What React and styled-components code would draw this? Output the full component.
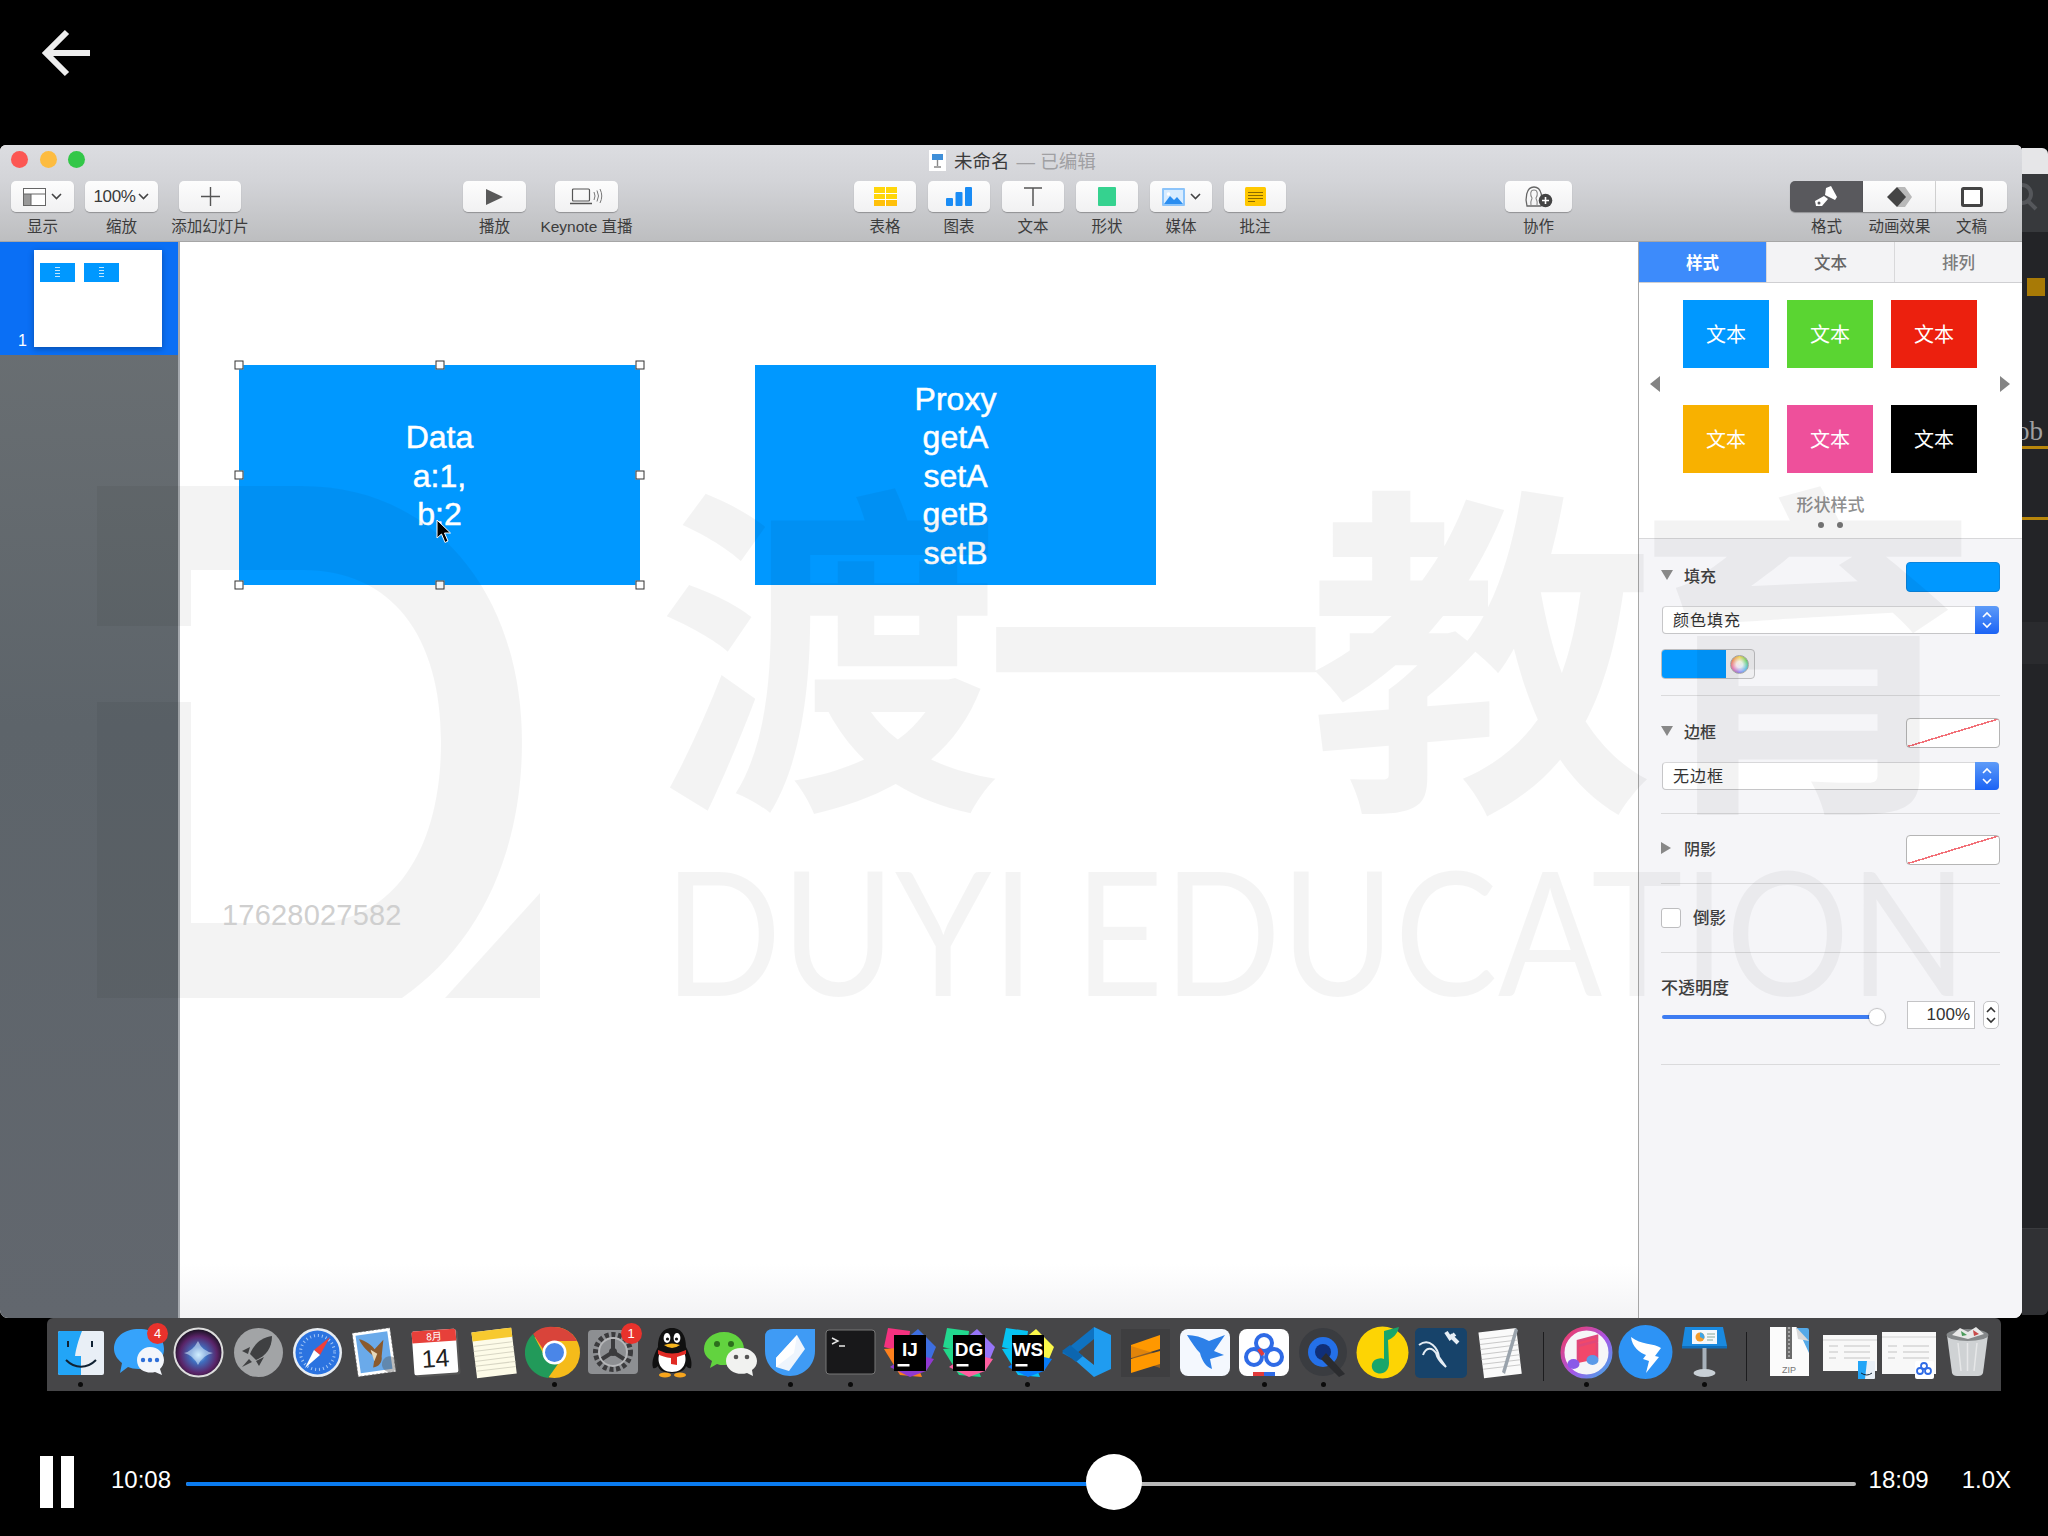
import styled, { createGlobalStyle } from "styled-components";

const UI_FONT = `"Liberation Sans", "Noto Sans CJK SC", sans-serif`;

const GlobalStyle = createGlobalStyle`
  html, body {
    margin: 0;
    padding: 0;
    background: #000;
  }
  * {
    box-sizing: border-box;
  }
`;

export default function App() {
  return (
    <>
      <GlobalStyle />
      <Page>
        <TopBar>
          <BackIcon width="60" height="56" viewBox="0 0 60 56">
            <path d="M28 6 L7 27 L28 48 M7 27 H51" fill="none" stroke="#eee" strokeWidth="6" />
          </BackIcon>
        </TopBar>
        <WindowRow>
          <Window>
            <TitleBar>
              <Lights>
                <Light $color="#fc5753" />
                <Light $color="#fdbc40" />
                <Light $color="#33c748" />
              </Lights>
              <DocIcon width="17" height="21" viewBox="0 0 17 21">
                <rect width="17" height="21" fill="#fff" />
                <rect x="3" y="4" width="11" height="6" fill="#3f8fd8" />
                <path d="M8.5 10v6M5 17h7" stroke="#888" strokeWidth="1.4" />
              </DocIcon>
              <TitleText>未命名</TitleText>
              <TitleMuted>— 已编辑</TitleMuted>
            </TitleBar>
            <Toolbar>
              <ToolGroup>
                <Tool label="显示" $w={63}>
                  <LayoutGlyph />
                  <Chevron />
                </Tool>
                <Tool label="缩放" $w={73}>
                  <ZoomText>100%</ZoomText>
                  <Chevron />
                </Tool>
              </ToolGroup>
              <ToolGroup $left={21}>
                <Tool label="添加幻灯片" $w={62}>
                  <PlusGlyph />
                </Tool>
              </ToolGroup>
              <ToolGroup $left={222} $gap={29}>
                <Tool label="播放" $w={63}>
                  <PlayGlyph />
                </Tool>
                <Tool label="Keynote 直播" $w={63}>
                  <LiveGlyph />
                </Tool>
              </ToolGroup>
              <ToolGroup $left={236} $gap={12}>
                <Tool label="表格" $w={62}>
                  <TableGlyph />
                </Tool>
                <Tool label="图表" $w={62}>
                  <ChartGlyph />
                </Tool>
                <Tool label="文本" $w={62}>
                  <TextGlyph />
                </Tool>
                <Tool label="形状" $w={62}>
                  <ShapeGlyph />
                </Tool>
                <Tool label="媒体" $w={62}>
                  <MediaGlyph />
                  <Chevron />
                </Tool>
                <Tool label="批注" $w={62}>
                  <CommentGlyph />
                </Tool>
              </ToolGroup>
              <ToolGroup $left={219}>
                <Tool label="协作" $w={67}>
                  <CollabGlyph />
                </Tool>
              </ToolGroup>
              <ToolGroup $left={218} $gap={0}>
                <Segment label="格式" $w={73} $active $pos="first">
                  <BrushGlyph />
                </Segment>
                <Segment label="动画效果" $w={73}>
                  <AnimateGlyph />
                </Segment>
                <Segment label="文稿" $w={71} $pos="last">
                  <DocumentGlyph />
                </Segment>
              </ToolGroup>
            </Toolbar>
            <Main>
              <Sidebar>
                <SlideRow>
                  <SlideNumber>1</SlideNumber>
                  <Thumb>
                    <ThumbBox />
                    <ThumbBox />
                  </Thumb>
                </SlideRow>
              </Sidebar>
              <Canvas>
                <Shape>
                  <span>Data</span>
                  <span>a:1,</span>
                  <span>b:2</span>
                  {[
                    [0, 0],
                    [50, 0],
                    [100, 0],
                    [0, 50],
                    [100, 50],
                    [0, 100],
                    [50, 100],
                    [100, 100],
                  ].map(([x, y]) => (
                    <Handle key={`${x}-${y}`} $x={x} $y={y} />
                  ))}
                  <Cursor width="16" height="25" viewBox="0 0 16 25">
                    <path d="M1 1 V19 L5.5 15 L9 23.5 L12 22 L8.5 14 H14.5 Z" fill="#000" stroke="#fff" strokeWidth="1" />
                  </Cursor>
                </Shape>
                <Shape>
                  <span>Proxy</span>
                  <span>getA</span>
                  <span>setA</span>
                  <span>getB</span>
                  <span>setB</span>
                </Shape>
              </Canvas>
              <Panel>
                <Tabs>
                  <Tab $active>样式</Tab>
                  <Tab>文本</Tab>
                  <Tab $muted>排列</Tab>
                </Tabs>
                <StylePicker>
                  <PickerRow>
                    <PickerArrow $dir="left" />
                    <SwatchGrid>
                      {["#0098ff", "#5ad532", "#ec200e", "#f8b100", "#ee509b", "#000000"].map((c) => (
                        <StyleSwatch key={c} $color={c}>
                          文本
                        </StyleSwatch>
                      ))}
                    </SwatchGrid>
                    <PickerArrow $dir="right" />
                  </PickerRow>
                  <PickerLabel>形状样式</PickerLabel>
                  <PickerDots>
                    <i />
                    <i />
                  </PickerDots>
                </StylePicker>
                <Inspector>
                  <Section $top={23} $bottom={16}>
                    <SectionHead>
                      <Disclosure />
                      <SectionTitle>填充</SectionTitle>
                      <ColorChip $color="#0098ff" />
                    </SectionHead>
                    <Select>颜色填充</Select>
                    <ColorWell>
                      <WellColor />
                      <WellWheel />
                    </ColorWell>
                  </Section>
                  <Section $top={22} $bottom={23}>
                    <SectionHead>
                      <Disclosure />
                      <SectionTitle>边框</SectionTitle>
                      <ColorChip $none />
                    </SectionHead>
                    <Select>无边框</Select>
                  </Section>
                  <Section $top={21} $bottom={18}>
                    <SectionHead>
                      <Disclosure $closed />
                      <SectionTitle>阴影</SectionTitle>
                      <ColorChip $none />
                    </SectionHead>
                  </Section>
                  <Section $top={24} $bottom={24}>
                    <CheckRow>
                      <CheckBox />
                      <CheckLabel>倒影</CheckLabel>
                    </CheckRow>
                  </Section>
                  <Section $top={23} $bottom={35}>
                    <OpacityLabel>不透明度</OpacityLabel>
                    <OpacityRow>
                      <Slider>
                        <SliderThumb />
                      </Slider>
                      <NumberField>100%</NumberField>
                      <Spinner>
                        <SpinGlyph color="#333" />
                      </Spinner>
                    </OpacityRow>
                  </Section>
                </Inspector>
              </Panel>
            </Main>
            <Watermark>
              <LogoMark width="450" height="520" viewBox="0 0 450 520">
                <path d="M0 0 H205 C340 0 425 110 425 256 C425 370 380 460 305 512 H0 V216 H94 V437 H215 C295 437 344 365 344 256 C344 150 295 84 205 84 H94 V140 H0 Z" />
                <path d="M348 512 L443 407 V512 Z" />
              </LogoMark>
              <BigName>渡一教育</BigName>
              <LatinName>DUYI EDUCATION</LatinName>
              <PhoneMark>17628027582</PhoneMark>
            </Watermark>
          </Window>
          <PeekWindow>
            <PeekTitle />
            <PeekSearch>
              <svg width="26" height="40" viewBox="0 0 26 40">
                <circle cx="0" cy="14" r="9" fill="none" stroke="#55575b" strokeWidth="4" />
                <path d="M6 21 L14 29" stroke="#55575b" strokeWidth="4" />
              </svg>
            </PeekSearch>
            <PeekEditor>
              <PeekMarker />
              <PeekWord>ob</PeekWord>
              <PeekRule $top={0} />
              <PeekRule $top={68} />
              <PeekBand />
              <PeekFooter />
            </PeekEditor>
          </PeekWindow>
        </WindowRow>
        <Dock>
          <DockSlot dot>
            <FinderIcon />
          </DockSlot>
          <DockSlot badge="4">
            <MessagesIcon />
          </DockSlot>
          <DockSlot>
            <SiriIcon />
          </DockSlot>
          <DockSlot>
            <LaunchpadIcon />
          </DockSlot>
          <DockSlot>
            <SafariIcon />
          </DockSlot>
          <DockSlot>
            <MailIcon />
          </DockSlot>
          <DockSlot>
            <CalendarIcon />
          </DockSlot>
          <DockSlot>
            <NotesIcon />
          </DockSlot>
          <DockSlot dot>
            <ChromeIcon />
          </DockSlot>
          <DockSlot badge="1">
            <SettingsIcon />
          </DockSlot>
          <DockSlot>
            <QQIcon />
          </DockSlot>
          <DockSlot>
            <WeChatIcon />
          </DockSlot>
          <DockSlot dot>
            <PenIcon />
          </DockSlot>
          <DockSlot dot>
            <TerminalIcon />
          </DockSlot>
          <DockSlot>
            <JetBrainsIcon label="IJ" colors={["#f5317f", "#3d6ee0", "#fc801d", "#9039d0"]} />
          </DockSlot>
          <DockSlot>
            <JetBrainsIcon label="DG" colors={["#22d88f", "#9775f8", "#21d789", "#ff5fa0"]} />
          </DockSlot>
          <DockSlot dot>
            <JetBrainsIcon label="WS" colors={["#07c3f2", "#fcf84a", "#07c3f2", "#087cfa"]} />
          </DockSlot>
          <DockSlot>
            <VSCodeIcon />
          </DockSlot>
          <DockSlot>
            <SublimeIcon />
          </DockSlot>
          <DockSlot>
            <BirdIcon />
          </DockSlot>
          <DockSlot dot>
            <BaiduIcon />
          </DockSlot>
          <DockSlot dot>
            <QuickTimeIcon />
          </DockSlot>
          <DockSlot>
            <MusicIcon />
          </DockSlot>
          <DockSlot>
            <WorkbenchIcon />
          </DockSlot>
          <DockSlot>
            <TextEditIcon />
          </DockSlot>
          <DockDivider />
          <DockSlot dot>
            <ITunesIcon />
          </DockSlot>
          <DockSlot>
            <DingIcon />
          </DockSlot>
          <DockSlot dot>
            <KeynoteIcon />
          </DockSlot>
          <DockDivider />
          <DockSlot>
            <ZipIcon />
          </DockSlot>
          <DockSlot>
            <StackIcon kind="finder" />
          </DockSlot>
          <DockSlot>
            <StackIcon kind="baidu" />
          </DockSlot>
          <DockSlot>
            <TrashIcon />
          </DockSlot>
        </Dock>
        <Player>
          <Pause>
            <i />
            <i />
          </Pause>
          <PlayerTime $left={37}>10:08</PlayerTime>
          <Track>
            <TrackFill style={{ width: `${((1114 - 185.5) / 1670.5) * 100}%` }}>
              <TrackThumb />
            </TrackFill>
          </Track>
          <PlayerTime $left={13}>18:09</PlayerTime>
          <Speed>1.0X</Speed>
        </Player>
      </Page>
    </>
  );
}

function Tool({ label, $w, children }) {
  return (
    <ToolBox $w={$w}>
      <ToolButton>{children}</ToolButton>
      <ToolLabel>{label}</ToolLabel>
    </ToolBox>
  );
}

function Segment({ label, $w, $active, $pos, children }) {
  return (
    <ToolBox $w={$w}>
      <SegmentButton $active={$active} $pos={$pos}>
        {children}
      </SegmentButton>
      <ToolLabel>{label}</ToolLabel>
    </ToolBox>
  );
}

function Select({ children }) {
  return (
    <SelectBox>
      <SelectText>{children}</SelectText>
      <SelectStepper>
        <SpinGlyph color="#fff" />
      </SelectStepper>
    </SelectBox>
  );
}

function DockSlot({ dot, badge, children }) {
  return (
    <Slot>
      <svg width="59" height="58" viewBox="0 0 59 58">
        {children}
      </svg>
      {badge && <Badge>{badge}</Badge>}
      <SlotDot $on={dot} />
    </Slot>
  );
}

/* toolbar glyphs */
const Chevron = () => (
  <ChevronSvg width="11" height="7" viewBox="0 0 11 7">
    <path d="M1 1 L5.5 5.5 L10 1" fill="none" stroke="#444" strokeWidth="1.6" />
  </ChevronSvg>
);
const LayoutGlyph = () => (
  <svg width="23" height="18" viewBox="0 0 23 18">
    <rect x="0.5" y="0.5" width="22" height="17" fill="#fff" stroke="#666" />
    <rect x="1" y="6" width="7" height="11" fill="#999" />
    <path d="M1 6 H22 M8 6 V17" stroke="#666" />
  </svg>
);
const PlusGlyph = () => (
  <svg width="19" height="19" viewBox="0 0 19 19">
    <path d="M9.5 0 V19 M0 9.5 H19" stroke="#555" strokeWidth="1.4" />
  </svg>
);
const PlayGlyph = () => (
  <svg width="17" height="16" viewBox="0 0 17 16">
    <path d="M0 0 L17 8 L0 16 Z" fill="#595959" />
  </svg>
);
const LiveGlyph = () => (
  <svg width="33" height="17" viewBox="0 0 33 17">
    <rect x="2.5" y="1" width="17" height="12" rx="1" fill="none" stroke="#555" strokeWidth="1.2" />
    <path d="M0 15.5 H22" stroke="#555" strokeWidth="1.6" />
    <path d="M24 4 Q26 8 24 12 M27 2.5 Q30 8 27 13.5 M30 1 Q33.5 8 30 15" fill="none" stroke="#777" strokeWidth="1" />
  </svg>
);
const TableGlyph = () => (
  <svg width="23" height="19" viewBox="0 0 23 19">
    <rect width="23" height="13" fill="#ffd60a" />
    <rect y="13" width="23" height="6" fill="#ffc00a" />
    <path d="M11.5 0 V19 M0 6.5 H23 M0 12.5 H23" stroke="#fff" strokeWidth="1" />
  </svg>
);
const ChartGlyph = () => (
  <svg width="26" height="19" viewBox="0 0 26 19">
    <rect y="11" width="7" height="8" rx="1" fill="#1a8cf5" />
    <rect x="9.5" y="5" width="7" height="14" rx="1" fill="#1a8cf5" />
    <rect x="19" y="0" width="7" height="19" rx="1" fill="#1a8cf5" />
  </svg>
);
const TextGlyph = () => (
  <svg width="18" height="19" viewBox="0 0 18 19">
    <path d="M0 1 H18 M9 1 V19" stroke="#555" strokeWidth="1.5" fill="none" />
  </svg>
);
const ShapeGlyph = () => (
  <svg width="18" height="19" viewBox="0 0 18 19">
    <rect width="18" height="19" rx="1" fill="#35d28f" />
  </svg>
);
const MediaGlyph = () => (
  <svg width="23" height="18" viewBox="0 0 23 18">
    <rect width="23" height="18" rx="1" fill="#8cc4fa" />
    <rect x="2" y="2" width="19" height="14" fill="#d8ecff" />
    <path d="M2 16 L8 8 L12 12 L15 9 L21 16 Z" fill="#2a8df0" />
    <circle cx="6.5" cy="6" r="1.8" fill="#fff" />
  </svg>
);
const CommentGlyph = () => (
  <svg width="21" height="19" viewBox="0 0 21 19">
    <rect width="21" height="19" rx="1.5" fill="#ffc800" />
    <path d="M3 5.5 H18 M3 8.5 H18 M3 11.5 H18 M3 14.5 H10" stroke="#8a6a00" strokeWidth="1" />
  </svg>
);
const CollabGlyph = () => (
  <svg width="29" height="24" viewBox="0 0 29 24">
    <path d="M3 21 C1 14 2 2 10 2 C18 2 19 14 17 21 Z" fill="none" stroke="#666" strokeWidth="1.3" />
    <path d="M7 20 C6 15 8 15 8 13 C6 10 6 5 10 5 C14 5 14 10 12 13 C12 15 14 15 13 20" fill="none" stroke="#888" strokeWidth="1.1" />
    <circle cx="21.5" cy="15.5" r="6.8" fill="#444" />
    <path d="M21.5 12 V19 M18 15.5 H25" stroke="#fff" strokeWidth="1.6" />
  </svg>
);
const BrushGlyph = () => (
  <svg width="23" height="21" viewBox="0 0 23 21">
    <path d="M11 2 L16 0 L22 11 L20 14 L10 9 Z" fill="#fff" />
    <path d="M9 10 L13 13 L7 20 L1 20 L0 15 Z" fill="#fff" />
    <circle cx="4" cy="17" r="1.5" fill="#5a5a5e" />
  </svg>
);
const AnimateGlyph = () => (
  <svg width="25" height="20" viewBox="0 0 25 20">
    <path d="M10 0 L15 10 L10 20 L18 20 L25 10 L18 0 Z" fill="#b9b9b9" />
    <path d="M10 0 L19 10 L10 20 L0 10 Z" fill="#444" />
  </svg>
);
const DocumentGlyph = () => (
  <svg width="22" height="20" viewBox="0 0 22 20">
    <rect x="1.5" y="1.5" width="19" height="17" rx="1" fill="#fff" stroke="#444" strokeWidth="3" />
  </svg>
);
const SpinGlyph = ({ color }) => (
  <svg width="12" height="20" viewBox="0 0 12 20">
    <path d="M2 7 L6 3 L10 7 M2 13 L6 17 L10 13" fill="none" stroke={color} strokeWidth="1.6" />
  </svg>
);

/* dock icons, all drawn in a 59 x 58 slot */
const FinderIcon = () => (
  <g>
    <rect x="7" y="8" width="46" height="44" rx="2" fill="#e9eff6" />
    <path d="M9 8 H31 C27 18 25 26 24 33 H30 V52 H9 Q7 52 7 50 V10 Q7 8 9 8 Z" fill="#22a5f7" />
    <path d="M17 18 V24 M41 18 V24" stroke="#123" strokeWidth="2" />
    <path d="M15 37 C24 46 36 46 45 37" fill="none" stroke="#123" strokeWidth="2" />
  </g>
);
const MessagesIcon = () => (
  <g>
    <path d="M29 6 C44 6 54 14 54 26 C54 38 44 46 29 46 C24 46 21 45 18 44 L10 50 L12 40 C7 36 4 31 4 26 C4 14 14 6 29 6 Z" fill="#36a3fb" />
    <path d="M40 24 C48 24 54 30 54 37 C54 41 52 44 50 46 L52 52 L45 49 C38 51 27 48 27 37 C27 30 33 24 40 24 Z" fill="#f3f6fb" />
    <circle cx="33" cy="37" r="2.2" fill="#2f6fd8" />
    <circle cx="40" cy="37" r="2.2" fill="#2f6fd8" />
    <circle cx="47" cy="37" r="2.2" fill="#2f6fd8" />
  </g>
);
const SiriIcon = () => (
  <g>
    <defs>
      <radialGradient id="siri" cx="50%" cy="55%" r="55%">
        <stop offset="0" stopColor="#bfe9ff" />
        <stop offset="0.3" stopColor="#3f6fc0" />
        <stop offset="0.7" stopColor="#5a2468" />
        <stop offset="1" stopColor="#101018" />
      </radialGradient>
    </defs>
    <circle cx="29.5" cy="29.5" r="24" fill="url(#siri)" stroke="#ddd" strokeWidth="2" />
    <path d="M15 30 Q24 28 29 18 Q33 28 44 30 Q34 32 29 42 Q24 32 15 30 Z" fill="#dff3ff" opacity="0.55" />
  </g>
);
const LaunchpadIcon = () => (
  <g>
    <circle cx="29.5" cy="29.5" r="24.5" fill="#a2a4a6" />
    <path d="M43 13 C33 14 25 21 21 31 L27 37 C37 33 43 25 43 13 Z" fill="#3f4042" />
    <path d="M21 24 L13 28 L19 31 Z M35 34 L30 43 L27 38 Z M20 36 L13 44 L23 39 Z" fill="#3f4042" />
  </g>
);
const SafariIcon = () => (
  <g>
    <circle cx="29.5" cy="29.5" r="24.5" fill="#e8edf2" />
    <circle cx="29.5" cy="29.5" r="22" fill="#2b73e0" />
    <circle cx="29.5" cy="29.5" r="17" fill="none" stroke="#a5c8f5" strokeWidth="3" strokeDasharray="1 3" />
    <path d="M42 14 L32 32 L26 27 Z" fill="#f0403a" />
    <path d="M17 45 L26 27 L32 32 Z" fill="#fff" />
  </g>
);
const MailIcon = () => (
  <g transform="rotate(-8 29 29)">
    <rect x="8" y="7" width="38" height="44" fill="#fff" strokeDasharray="2 2" stroke="#666" strokeWidth="0.6" />
    <rect x="11" y="10" width="32" height="38" fill="#6aaaea" />
    <path d="M14 14 C20 16 26 22 28 26 L38 18 L34 34 C34 40 30 44 24 44 L27 34 C22 28 16 22 14 14 Z" fill="#8a5a2e" />
    <path d="M24 26 L30 31 L26 38 Z" fill="#e8d8b8" />
    <circle cx="41" cy="43" r="8" fill="#555" opacity="0.4" />
  </g>
);
const CalendarIcon = () => (
  <g transform="rotate(-4 29 29)">
    <rect x="9" y="9" width="44" height="44" rx="2" fill="#555" />
    <rect x="7" y="7" width="44" height="44" rx="2" fill="#fff" />
    <path d="M7 9 Q7 7 9 7 H49 Q51 7 51 9 V19 H7 Z" fill="#e7403a" />
    <text x="29" y="17" textAnchor="middle" fontSize="10" fill="#fff" fontFamily={UI_FONT}>
      8月
    </text>
    <text x="29" y="44" textAnchor="middle" fontSize="25" fill="#222" fontFamily={UI_FONT}>
      14
    </text>
  </g>
);
const NotesIcon = () => (
  <g transform="rotate(-7 29 29)">
    <rect x="9" y="7" width="40" height="46" fill="#fdfbe8" />
    <rect x="9" y="7" width="40" height="9" fill="#f7c92f" />
    <path d="M9 21 H49 M9 26 H49 M9 31 H49 M9 36 H49 M9 41 H49 M9 46 H49" stroke="#d8d6c4" strokeWidth="1" />
  </g>
);
const ChromeIcon = () => (
  <g>
    <circle cx="29.5" cy="29.5" r="25.5" fill="#f5bb1a" />
    <path d="M29.5 4 A25.5 25.5 0 0 1 52 18 L29.5 18 A12 12 0 0 0 18 26 L8 11 A25.5 25.5 0 0 1 29.5 4 Z" fill="#d9443a" />
    <path d="M8 11 L19 32 A12 12 0 0 0 33 41 L23 55 A25.5 25.5 0 0 1 8 11 Z" fill="#229a5a" />
    <circle cx="29.5" cy="29.5" r="12" fill="#fff" />
    <circle cx="29.5" cy="29.5" r="9.5" fill="#4a86e8" />
  </g>
);
const SettingsIcon = () => (
  <g>
    <rect x="4" y="7" width="50" height="44" rx="4" fill="#8d8f92" />
    <circle cx="29" cy="29" r="17" fill="none" stroke="#3b3b3d" strokeWidth="6" strokeDasharray="4 2.5" />
    <circle cx="29" cy="29" r="14" fill="none" stroke="#b5b6b8" strokeWidth="2" />
    <path d="M29 29 V16 M29 29 L18 36 M29 29 L40 36" stroke="#3b3b3d" strokeWidth="4" />
    <circle cx="29" cy="29" r="4" fill="#3b3b3d" />
  </g>
);
const QQIcon = () => (
  <g>
    <path d="M29 5 C40 5 43 15 43 24 C46 30 50 38 48 45 C46 46 44 44 43 43 C42 47 38 50 29 50 C20 50 16 47 15 43 C14 44 12 46 10 45 C8 38 12 30 15 24 C15 15 18 5 29 5 Z" fill="#101010" />
    <path d="M17 29 C22 32 36 32 41 29 C45 38 41 49 29 49 C17 49 13 38 17 29 Z" fill="#fff" />
    <ellipse cx="24" cy="15" rx="3.4" ry="5" fill="#fff" />
    <ellipse cx="34" cy="15" rx="3.4" ry="5" fill="#fff" />
    <circle cx="24.5" cy="16" r="1.6" fill="#111" />
    <circle cx="33.5" cy="16" r="1.6" fill="#111" />
    <path d="M21 22 Q29 19 37 22 Q29 28 21 22 Z" fill="#f7b51d" />
    <path d="M15 27 Q29 34 43 27 L43 31 L34 34 V42 L28 41 V35 Q20 34 15 31 Z" fill="#e02a24" />
    <ellipse cx="22" cy="52" rx="6" ry="2.5" fill="#f7a51d" />
    <ellipse cx="37" cy="52" rx="6" ry="2.5" fill="#f7a51d" />
  </g>
);
const WeChatIcon = () => (
  <g>
    <path d="M22 9 C34 9 42 17 42 26 C42 35 34 42 22 42 C19 42 17 42 15 41 L8 45 L10 38 C5 35 2 31 2 26 C2 17 10 9 22 9 Z" fill="#62d33f" />
    <circle cx="15" cy="21" r="3" fill="#2d6e1d" />
    <circle cx="29" cy="21" r="3" fill="#2d6e1d" />
    <path d="M39 25 C48 25 55 31 55 38 C55 42 53 45 50 47 L51 53 L45 50 C36 53 24 48 24 38 C24 31 30 25 39 25 Z" fill="#f1f2f0" />
    <circle cx="34" cy="34" r="2.3" fill="#555" />
    <circle cx="45" cy="34" r="2.3" fill="#555" />
  </g>
);
const PenIcon = () => (
  <g>
    <path d="M12 6 H54 V28 C54 42 43 53 29 53 C15 53 4 42 4 28 V14 Q4 6 12 6 Z" fill="#3f9bf5" />
    <path d="M36 12 L44 26 L28 48 L15 44 L15 35 Z" fill="#eef5fd" />
    <path d="M15 35 L36 12 L33 30 L15 44 Z" fill="#fff" />
  </g>
);
const TerminalIcon = () => (
  <g>
    <rect x="5" y="7" width="49" height="44" rx="3" fill="#18181a" stroke="#777" strokeWidth="1" />
    <path d="M11 15 L17 18 L11 21 M18 23 H24" fill="none" stroke="#e8e8e8" strokeWidth="1.4" />
  </g>
);
const JetBrainsIcon = ({ label, colors }) => (
  <g>
    <path d="M8 5 L30 8 L27 30 L4 24 Z" fill={colors[0]} />
    <path d="M38 6 L56 24 L46 48 L26 16 Z" fill={colors[1]} />
    <path d="M4 26 L20 52 L42 54 L30 24 Z" fill={colors[2]} />
    <path d="M30 30 L54 36 L46 48 L30 54 L10 44 Z" fill={colors[3]} />
    <rect x="14" y="12" width="32" height="36" fill="#000" />
    <text x="30" y="33" textAnchor="middle" fontSize="19" fontWeight="700" fill="#fff" fontFamily={UI_FONT}>
      {label}
    </text>
    <rect x="17.5" y="41" width="12" height="2.5" fill="#fff" />
  </g>
);
const VSCodeIcon = () => (
  <g>
    <path d="M37 4 L54 12 V46 L37 54 L12 32 L18 27 L37 42 Z" fill="#1f9cf0" />
    <path d="M37 4 V16 L14 35 L5 30 Z" fill="#0f72c1" />
    <path d="M5 28 L13 22 L26 33 L19 39 Z" fill="#0c66b0" />
  </g>
);
const SublimeIcon = () => (
  <g>
    <rect x="5" y="6" width="49" height="48" fill="#3e3e40" />
    <path d="M44 12 V26 L15 35 V22 Z" fill="#ff9800" />
    <path d="M15 23 L44 32 V45 L15 35 Z" fill="#c97412" opacity="0.55" />
    <path d="M44 28 V41 L15 50 V36 Z" fill="#ff9800" />
  </g>
);
const BirdIcon = () => (
  <g>
    <rect x="4" y="6" width="50" height="47" rx="8" fill="#f4f8fe" />
    <path d="M49 12 L33 18 C26 14 18 12 11 12 C16 20 20 26 24 30 C26 38 30 44 36 46 L34 36 L48 32 L38 28 Z" fill="#2d80e8" />
  </g>
);
const BaiduIcon = () => (
  <g>
    <rect x="4" y="6" width="50" height="47" rx="8" fill="#fff" />
    <g fill="none" stroke="#2f6be6" strokeWidth="4">
      <circle cx="29" cy="20" r="8" />
      <circle cx="19" cy="34" r="8" />
      <circle cx="39" cy="34" r="8" />
    </g>
    <path d="M24 26 L28 32" stroke="#e23b3b" strokeWidth="4" />
    <rect x="18" y="49" width="11" height="4" fill="#e23b3b" />
    <rect x="29" y="49" width="11" height="4" fill="#2f6be6" />
  </g>
);
const QuickTimeIcon = () => (
  <g>
    <circle cx="29" cy="29" r="24" fill="#3a3c40" />
    <circle cx="29" cy="29" r="15" fill="#2470e8" />
    <circle cx="29" cy="29" r="8" fill="#102f78" />
    <path d="M32 30 L51 51 L45 54 L27 36 Z" fill="#2b2c2f" />
  </g>
);
const MusicIcon = () => (
  <g>
    <circle cx="29.5" cy="29.5" r="26" fill="#fdd404" />
    <path d="M31 8 L46 4 C44 12 40 15 35 17 L36 40 C36 48 30 52 24 50 C17 48 17 38 24 36 C27 35 29 35 31 36 Z" fill="#18a66a" />
  </g>
);
const WorkbenchIcon = () => (
  <g>
    <rect x="3" y="5" width="52" height="50" rx="5" fill="#17436a" />
    <path d="M7 22 C18 14 26 26 27 34 L34 44 C30 40 26 38 24 30 C20 24 14 24 11 32" fill="none" stroke="#e6eef5" strokeWidth="2" />
    <path d="M38 12 L46 20 M34 9 L38 15 L43 11" fill="none" stroke="#e6eef5" strokeWidth="4" />
  </g>
);
const TextEditIcon = () => (
  <g>
    <g transform="rotate(-7 29 29)">
      <rect x="9" y="7" width="38" height="46" fill="#fafafa" />
      <path d="M9 14 H47 M9 19 H47 M9 24 H47 M9 29 H47 M9 34 H47 M9 39 H47 M9 44 H47" stroke="#c9c9c9" strokeWidth="1" />
    </g>
    <path d="M43 5 L46 7 L33 51 L30 49 Z" fill="#9aa3ac" />
  </g>
);
const ITunesIcon = () => (
  <g>
    <defs>
      <linearGradient id="itunes" x1="0" y1="0" x2="1" y2="1">
        <stop offset="0" stopColor="#f53a5a" />
        <stop offset="0.55" stopColor="#a855e8" />
        <stop offset="1" stopColor="#38b0e8" />
      </linearGradient>
    </defs>
    <circle cx="29.5" cy="29.5" r="24" fill="#f6f6f8" stroke="url(#itunes)" strokeWidth="4" />
    <path d="M21 40 V18 L40 13 V36 M21 18 L40 13 V18 L21 23 Z" fill="#f2486a" stroke="#e0487a" strokeWidth="2.6" />
    <ellipse cx="16.5" cy="41" rx="6" ry="5" fill="#8a5ae8" />
    <ellipse cx="35.5" cy="37" rx="6" ry="5" fill="#5a9ae8" />
  </g>
);
const DingIcon = () => (
  <g>
    <circle cx="29.5" cy="29" r="27" fill="#2d93f5" />
    <path d="M15 14 C25 22 38 20 45 25 L39 33 L43 34 L30 50 L33 38 L27 36 L30 32 C24 30 16 24 15 14 Z" fill="#fff" />
  </g>
);
const KeynoteIcon = () => (
  <g>
    <path d="M10 4 H48 L52 23 H7 Z" fill="#1a8ae0" />
    <rect x="7" y="23" width="45" height="2.5" fill="#0f6cb8" />
    <rect x="17" y="7" width="25" height="14" fill="#f5f8fc" />
    <circle cx="25" cy="14" r="4.5" fill="#f39c2c" />
    <path d="M25 14 V9.5 A4.5 4.5 0 0 1 29 16 Z" fill="#3da5e8" />
    <path d="M32 11 H40 M32 14 H40 M32 17 H38" stroke="#8a9" strokeWidth="1" />
    <rect x="27.5" y="25" width="4" height="22" fill="#a7b1ba" />
    <ellipse cx="29.5" cy="50" rx="11" ry="4" fill="#c9d0d6" />
  </g>
);
const ZipIcon = () => (
  <g>
    <path d="M10 4 H36 L49 15 V53 H10 Z" fill="#fbfbfb" />
    <path d="M36 5 H47 Q49 5 49 7 V30 L42 15 Z" fill="#54a9e8" />
    <path d="M36 4 L49 18 L38 16 Z" fill="#d8d8d8" />
    <rect x="26" y="4" width="6" height="32" fill="#6a6a6a" />
    <path d="M29 4 V34" stroke="#bbb" strokeWidth="1.5" strokeDasharray="2 2" />
    <text x="29" y="50" textAnchor="middle" fontSize="9" fill="#777" fontFamily={UI_FONT}>
      ZIP
    </text>
  </g>
);
const StackIcon = ({ kind }) => (
  <g>
    <rect x="3" y={kind === "finder" ? 12 : 9} width="54" height={kind === "finder" ? 36 : 42} fill="#f8f8f8" />
    <path d={kind === "finder" ? "M3 17 H57" : "M3 14 H57"} stroke="#d2d2d2" strokeWidth="1" />
    <path d="M9 23 H18 M9 29 H18 M9 35 H16 M24 23 H50 M24 29 H50 M24 35 H50" stroke="#c4c4c4" strokeWidth="1" />
    {kind === "finder" ? (
      <g>
        <rect x="38" y="38" width="17" height="18" rx="1" fill="#e9eff6" />
        <path d="M38 38 H47 L45 56 H38 Z" fill="#22a5f7" />
        <path d="M41 50 Q47 54 52 50" fill="none" stroke="#123" strokeWidth="1" />
      </g>
    ) : (
      <g>
        <rect x="36" y="38" width="19" height="18" rx="2" fill="#fff" />
        <g fill="none" stroke="#2f6be6" strokeWidth="1.8">
          <circle cx="45" cy="43" r="3" />
          <circle cx="41" cy="48" r="3" />
          <circle cx="49" cy="48" r="3" />
        </g>
      </g>
    )}
  </g>
);
const TrashIcon = () => (
  <g>
    <path d="M9 12 H50 L45 50 Q44 53 40 53 H19 Q15 53 14 50 Z" fill="#cfd2d4" />
    <ellipse cx="29.5" cy="12" rx="21" ry="6" fill="#85888a" />
    <path d="M14 12 L22 5 L30 9 L38 4 L46 11 L30 16 Z" fill="#e8e8e8" />
    <path d="M23 8 L29 12 L24 13 Z" fill="#4a9a5a" />
    <path d="M35 7 L41 11 L36 13 Z" fill="#c84a4a" />
    <path d="M20 20 L23 48 M29.5 20 V48 M39 20 L36 48" stroke="#e6e7e8" strokeWidth="1.5" />
  </g>
);

const Page = styled.div`
  width: 2048px;
  height: 1536px;
  display: flex;
  flex-direction: column;
  background: #000;
  font-family: ${UI_FONT};
  overflow: hidden;
`;

const TopBar = styled.header`
  height: 145px;
  padding: 26px 0 0 39px;
`;

const BackIcon = styled.svg`
  display: block;
`;

const WindowRow = styled.div`
  height: 1173px;
  display: flex;
`;

const Window = styled.section`
  position: relative;
  width: 2022px;
  display: flex;
  flex-direction: column;
  border-radius: 6px 6px 8px 8px;
  overflow: hidden;
  background: #fff;
`;

const TitleBar = styled.div`
  height: 36px;
  display: flex;
  align-items: center;
  padding: 0 0 6px 929px;
  position: relative;
  background: linear-gradient(#dcdde1, #d3d4d8);
`;

const Lights = styled.div`
  position: absolute;
  left: 11px;
  top: 6px;
  display: flex;
  gap: 11.5px;
`;

const Light = styled.i`
  width: 17px;
  height: 17px;
  border-radius: 50%;
  background: ${(p) => p.$color};
`;

const DocIcon = styled.svg`
  margin-right: 8px;
`;

const TitleText = styled.span`
  font-size: 18.5px;
  color: #3b3b3b;
  margin-right: 7px;
`;

const TitleMuted = styled.span`
  font-size: 18.5px;
  color: #a0a0a3;
`;

const Toolbar = styled.div`
  height: 61px;
  display: flex;
  align-items: flex-start;
  padding-left: 11px;
  background: linear-gradient(#d3d4d8, #bdbec0);
  border-bottom: 1px solid #a6a6a6;
`;

const ToolGroup = styled.div`
  display: flex;
  gap: ${(p) => p.$gap ?? 11}px;
  margin-left: ${(p) => p.$left || 0}px;
`;

const ToolBox = styled.div`
  width: ${(p) => p.$w}px;
  display: flex;
  flex-direction: column;
  align-items: center;
`;

const ToolButton = styled.div`
  width: 100%;
  height: 31px;
  display: flex;
  align-items: center;
  justify-content: center;
  gap: 5px;
  background: linear-gradient(#fdfdfd, #f1f1f2);
  border-radius: 5px;
  box-shadow: 0 1px 1px rgba(0, 0, 0, 0.28);
`;

const SegmentButton = styled(ToolButton)`
  background: ${(p) => (p.$active ? "#59595d" : "linear-gradient(#fdfdfd, #f1f1f2)")};
  border-radius: ${(p) => (p.$pos === "first" ? "5px 0 0 5px" : p.$pos === "last" ? "0 5px 5px 0" : "0")};
  border-right: ${(p) => (p.$pos === "last" || p.$active ? "0" : "1px solid #d5d5d5")};
`;

const ToolLabel = styled.span`
  flex: none;
  margin-top: 6px;
  font-size: 15.5px;
  line-height: 18px;
  color: #3c3c3c;
  white-space: nowrap;
`;

const ChevronSvg = styled.svg`
  flex: none;
`;

const ZoomText = styled.span`
  font-size: 17px;
  color: #3a3a3a;
  letter-spacing: -0.4px;
  margin-right: -2px;
`;

const Main = styled.div`
  flex: 1;
  display: flex;
  min-height: 0;
`;

const Sidebar = styled.aside`
  width: 180px;
  background: linear-gradient(#6c7174, #5d646a 45%, #62676e);
  border-right: 2px solid #a5a9ae;
`;

const SlideRow = styled.div`
  height: 113px;
  padding: 8px 0 0 18px;
  display: flex;
  align-items: flex-end;
  background: #0a6ff5;
`;

const SlideNumber = styled.span`
  width: 16px;
  margin-bottom: 5px;
  font-size: 16px;
  line-height: 18px;
  color: #fff;
`;

const Thumb = styled.div`
  width: 128px;
  height: 97px;
  margin-bottom: 8px;
  padding: 13px 0 0 6px;
  display: flex;
  align-items: flex-start;
  gap: 9px;
  background: #fff;
  box-shadow: 0 2px 6px rgba(0, 0, 0, 0.3);
`;

const ThumbBox = styled.div`
  width: 35px;
  height: 19px;
  display: flex;
  align-items: center;
  justify-content: center;
  background: #0098ff;
  &::after {
    content: "";
    width: 5px;
    height: 11px;
    background: repeating-linear-gradient(#bfe5ff 0 1px, transparent 1px 3px);
  }
`;

const Canvas = styled.main`
  flex: 1;
  padding: 123px 0 0 59px;
  display: flex;
  align-items: flex-start;
  gap: 115px;
  background: linear-gradient(#fff 95%, #f3f3f5);
`;

const Shape = styled.div`
  position: relative;
  width: 401px;
  height: 220px;
  padding-top: 2px;
  display: flex;
  flex-direction: column;
  align-items: center;
  justify-content: center;
  background: #0098ff;
  color: #fff;
  font-size: 32px;
  line-height: 38.4px;
  -webkit-text-stroke: 0.5px #fff;
`;

const Handle = styled.i`
  position: absolute;
  left: ${(p) => p.$x}%;
  top: ${(p) => p.$y}%;
  width: 9px;
  height: 9px;
  transform: translate(-50%, -50%);
  background: #fff;
  border: 1px solid #333;
`;

const Cursor = styled.svg`
  position: absolute;
  left: 197px;
  top: 154px;
`;

const Panel = styled.aside`
  width: 384px;
  display: flex;
  flex-direction: column;
  border-left: 1px solid #a8a8a8;
  background: #f5f5f8;
`;

const Tabs = styled.div`
  height: 41px;
  display: flex;
  background: #f3f3f5;
  border-bottom: 1px solid #cfcfd2;
`;

const Tab = styled.div`
  flex: 1;
  display: flex;
  align-items: center;
  justify-content: center;
  font-size: 16.5px;
  font-weight: ${(p) => (p.$active ? 700 : 500)};
  color: ${(p) => (p.$active ? "#fff" : p.$muted ? "#7c7c7c" : "#666")};
  background: ${(p) => (p.$active ? "#3d8bfb" : "transparent")};
  & + & {
    border-left: 1px solid #d8d8da;
  }
`;

const StylePicker = styled.div`
  height: 256px;
  padding-top: 17px;
  display: flex;
  flex-direction: column;
  align-items: center;
  background: #fff;
  border-bottom: 1px solid #d8d8da;
`;

const PickerRow = styled.div`
  width: 100%;
  padding-left: 11px;
  display: flex;
  align-items: center;
  gap: 23px;
`;

const PickerArrow = styled.i`
  width: 0;
  height: 0;
  margin-top: -6px;
  border-style: solid;
  border-width: 8px 0 8px 10px;
  border-color: transparent transparent transparent #848484;
  transform: ${(p) => (p.$dir === "left" ? "rotate(180deg)" : "none")};
`;

const SwatchGrid = styled.div`
  display: grid;
  grid-template-columns: repeat(3, 86px);
  grid-auto-rows: 68px;
  column-gap: 18px;
  row-gap: 37px;
`;

const StyleSwatch = styled.div`
  padding-bottom: 2px;
  display: flex;
  align-items: center;
  justify-content: center;
  background: ${(p) => p.$color};
  color: #fff;
  font-size: 20px;
`;

const PickerLabel = styled.span`
  margin-top: 22px;
  font-size: 17px;
  line-height: 22px;
  font-weight: 500;
  color: #8f8f8f;
`;

const PickerDots = styled.div`
  margin-top: 5px;
  display: flex;
  gap: 13px;
  i {
    width: 6px;
    height: 6px;
    border-radius: 50%;
    background: #777;
  }
`;

const Inspector = styled.div`
  flex: 1;
  padding: 0 22px;
`;

const Section = styled.section`
  padding: ${(p) => p.$top}px 0 ${(p) => p.$bottom}px;
  border-bottom: 1px solid #dadadc;
`;

const SectionHead = styled.div`
  height: 30px;
  display: flex;
  align-items: center;
`;

const Disclosure = styled.i`
  display: block;
  width: 0;
  margin-bottom: 4px;
  border-style: solid;
  border-color: ${(p) => (p.$closed ? "transparent transparent transparent #888" : "#888 transparent transparent transparent")};
  border-width: ${(p) => (p.$closed ? "6px 0 6px 10px" : "10px 6px 0 6px")};
  margin-right: ${(p) => (p.$closed ? "13px" : "11px")};
`;

const SectionTitle = styled.span`
  margin-bottom: 5px;
  font-size: 16px;
  color: #3f3f3f;
  font-weight: 500;
`;

const ColorChip = styled.div`
  width: 94px;
  height: 30px;
  margin-left: auto;
  border-radius: 4px;
  border: 1px solid ${(p) => (p.$none ? "#b5b5b5" : "#0a84dd")};
  background: ${(p) =>
    p.$none
      ? `linear-gradient(to bottom right, #fff calc(50% - 1px), #f27078 calc(50% - 1px), #f27078 calc(50% + 0.5px), #fff calc(50% + 0.5px))`
      : p.$color};
`;

const SelectBox = styled.div`
  height: 28px;
  margin: 14px 1px 0;
  display: flex;
  align-items: center;
  border-radius: 4px;
  border: 1px solid #c6c6c8;
  border-top-color: #d8d8da;
  background: #fff;
`;

const SelectText = styled.span`
  flex: 1;
  padding-left: 10px;
  margin-bottom: 3px;
  font-size: 16px;
  letter-spacing: 1px;
  color: #333;
`;

const SelectStepper = styled.div`
  width: 24px;
  height: 28px;
  margin: -1px -1px -1px 0;
  display: flex;
  align-items: center;
  justify-content: center;
  border-radius: 0 4px 4px 0;
  background: linear-gradient(#5d9bf8, #1b63f5);
`;

const ColorWell = styled.div`
  width: 94px;
  height: 30px;
  margin-top: 15px;
  display: flex;
  border: 1px solid #bdbdbf;
  border-radius: 4px;
  overflow: hidden;
  background: #efeff1;
`;

const WellColor = styled.div`
  width: 64px;
  background: #0098ff;
`;

const WellWheel = styled.i`
  width: 19px;
  height: 19px;
  margin: 4.5px 0 0 4px;
  border-radius: 50%;
  background: radial-gradient(circle, rgba(255, 255, 255, 0.9) 25%, rgba(255, 255, 255, 0) 70%),
    conic-gradient(#f7d84a, #68d868, #5ac8e8, #8a7cf0, #f070b0, #f58a5a, #f7d84a);
  border: 1px solid #aaa;
`;

const CheckRow = styled.div`
  height: 20px;
  display: flex;
  align-items: center;
  gap: 12px;
`;

const CheckLabel = styled.span`
  margin-bottom: 2px;
  font-size: 16.5px;
  font-weight: 500;
  color: #3f3f3f;
`;

const CheckBox = styled.i`
  width: 20px;
  height: 20px;
  border: 1px solid #bdbdbf;
  border-radius: 3px;
  background: #fff;
`;

const OpacityLabel = styled.div`
  height: 24px;
  font-size: 17px;
  line-height: 25px;
  font-weight: 500;
  color: #3f3f3f;
`;

const OpacityRow = styled.div`
  height: 28px;
  margin-top: 1px;
  display: flex;
  align-items: center;
`;

const Slider = styled.div`
  position: relative;
  width: 215px;
  height: 4px;
  margin: 3px 30px 0 1px;
  border-radius: 2px;
  background: #3d7cf2;
`;

const SliderThumb = styled.i`
  position: absolute;
  right: -8px;
  top: -6px;
  width: 16px;
  height: 16px;
  border-radius: 50%;
  background: #fff;
  box-shadow: 0 0 1px 1px rgba(0, 0, 0, 0.22);
`;

const NumberField = styled.div`
  width: 68px;
  height: 28px;
  padding-right: 4px;
  display: flex;
  align-items: center;
  justify-content: flex-end;
  font-size: 17px;
  color: #333;
  background: #fff;
  border: 1px solid #c4c4c6;
`;

const Spinner = styled.div`
  width: 16px;
  height: 28px;
  margin-left: 8px;
  display: flex;
  align-items: center;
  justify-content: center;
  border: 1px solid #c4c4c6;
  border-radius: 5px;
  background: #fff;
`;

const Watermark = styled.div`
  position: absolute;
  inset: 0;
  pointer-events: none;
  overflow: hidden;
`;

const LogoMark = styled.svg`
  position: absolute;
  left: 97px;
  top: 341px;
  fill: rgba(0, 0, 0, 0.048);
`;

const BigName = styled.div`
  position: absolute;
  left: 657px;
  top: 274px;
  font-family: "Noto Sans CJK SC", sans-serif;
  font-size: 345px;
  line-height: 430px;
  font-weight: 700;
  letter-spacing: -19px;
  white-space: nowrap;
  color: rgba(0, 0, 0, 0.048);
`;

const LatinName = styled.div`
  position: absolute;
  left: 664px;
  top: 675px;
  font-family: Lato, sans-serif;
  font-size: 172px;
  line-height: 220px;
  font-weight: 400;
  white-space: nowrap;
  color: rgba(0, 0, 0, 0.045);
  transform: scaleX(0.898);
  transform-origin: left center;
`;

const PhoneMark = styled.div`
  position: absolute;
  left: 222px;
  top: 753px;
  font-size: 29px;
  line-height: 34px;
  letter-spacing: 0.2px;
  color: #cfcfcf;
`;

const PeekWindow = styled.aside`
  width: 26px;
  height: 1167px;
  margin-top: 3px;
  display: flex;
  flex-direction: column;
  overflow: hidden;
  border-radius: 0 6px 6px 0;
  background: #232427;
`;

const PeekTitle = styled.div`
  height: 26px;
  background: #e6e6e8;
`;

const PeekSearch = styled.div`
  height: 58px;
  background: #37393c;
  svg {
    display: block;
    margin-top: 6px;
  }
`;

const PeekEditor = styled.div`
  flex: 1;
  display: flex;
  flex-direction: column;
  overflow: hidden;
`;

const PeekMarker = styled.div`
  width: 18px;
  height: 18px;
  flex: none;
  margin: 46px 0 0 5px;
  background: #a87a06;
`;

const PeekWord = styled.div`
  flex: none;
  height: 29px;
  margin: 121px 0 0 -6px;
  font-family: "Liberation Serif", serif;
  font-size: 27px;
  line-height: 29px;
  color: #a0a0a0;
`;

const PeekRule = styled.div`
  height: 3px;
  flex: none;
  margin-top: ${(p) => p.$top}px;
  background: #b8860b;
`;

const PeekBand = styled.div`
  height: 42px;
  flex: none;
  margin-top: 102px;
  background: #2a2b2e;
`;

const PeekFooter = styled.div`
  flex: 1;
  margin-top: 564px;
  border-top: 1px solid #3a3b3e;
  background: #303134;
`;

const Dock = styled.nav`
  width: 1954px;
  height: 73px;
  margin-left: 47px;
  padding: 5px 0 0 4px;
  display: flex;
  align-items: flex-start;
  background: #464648;
  border-radius: 6px 6px 0 0;
`;

const Slot = styled.div`
  position: relative;
  width: 59.2px;
  flex: none;
  display: flex;
  flex-direction: column;
  align-items: center;
  svg {
    display: block;
  }
`;

const Badge = styled.b`
  position: absolute;
  left: 37px;
  top: 0;
  width: 21px;
  height: 21px;
  display: flex;
  align-items: center;
  justify-content: center;
  border-radius: 50%;
  background: #e8322c;
  color: #fff;
  font-size: 13px;
  font-weight: 400;
`;

const SlotDot = styled.i`
  width: 5px;
  height: 5px;
  margin-top: 1px;
  border-radius: 50%;
  background: ${(p) => (p.$on ? "#0b0b0b" : "transparent")};
`;

const DockDivider = styled.i`
  width: 1px;
  height: 49px;
  margin: 9px 13px 0 12px;
  flex: none;
  background: #1c1c1e;
`;

const Player = styled.footer`
  flex: 1;
  padding: 37px 37px 0 40px;
  display: flex;
  align-items: center;
`;

const Pause = styled.div`
  display: flex;
  gap: 8px;
  i {
    width: 13px;
    height: 52px;
    background: #fff;
  }
`;

const PlayerTime = styled.span`
  margin-left: ${(p) => p.$left}px;
  margin-bottom: 4px;
  font-size: 24px;
  color: #fff;
  white-space: nowrap;
`;

const Track = styled.div`
  flex: 1;
  height: 4px;
  margin: 4px 0 0 14.5px;
  border-radius: 2px;
  background: #b8b8b8;
`;

const TrackFill = styled.div`
  position: relative;
  height: 100%;
  border-radius: 2px;
  background: #0a7bf0;
`;

const TrackThumb = styled.i`
  position: absolute;
  right: -28px;
  top: -28px;
  width: 56px;
  height: 56px;
  border-radius: 50%;
  background: #fff;
`;

const Speed = styled.span`
  margin: 0 0 4px 33px;
  font-size: 24px;
  color: #fff;
  white-space: nowrap;
`;
